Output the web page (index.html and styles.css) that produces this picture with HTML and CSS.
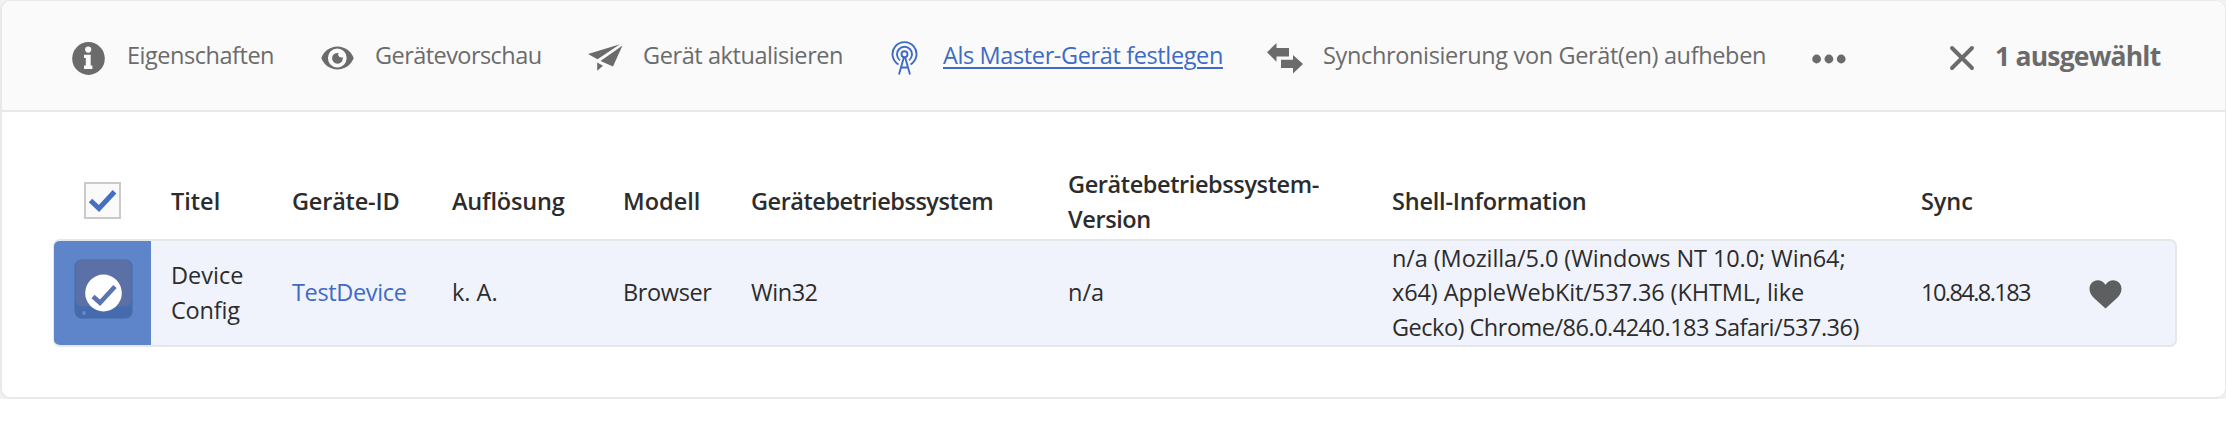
FILE: index.html
```html
<!DOCTYPE html>
<html lang="de">
<head>
<meta charset="utf-8">
<title>Geräte</title>
<link rel="stylesheet" href="styles.css">
</head>
<body>
<div class="frame">
<main class="panel">
  <header class="toolbar">
    <a class="action props"><svg class="icon" width="33" height="33" viewBox="0 0 33 33"><ellipse cx="16.5" cy="16.5" rx="16.3" ry="16.4" fill="#6b6b6b"/><circle cx="16.2" cy="7.6" r="3.1" fill="#fafafa"/><path d="M12 12.8h6.700v10.700h1.700V27h-8.400v-3.500h1.800V16H12z" fill="#fafafa"/></svg><span class="label">Eigenschaften</span></a>
    <a class="action preview"><svg class="icon" width="33" height="24" viewBox="0 0 33 24"><path fill="#6b6b6b" fill-rule="evenodd" d="M16.500 0.500C9 .5 2.500 5.500.3 12 2.500 18.500 9 23.500 16.500 23.500S30.500 18.500 32.700 12C30.500 5.500 24 .5 16.500.5zM16.300 2.600a9.400 9.400 0 1 1 0 18.800a9.400 9.400 0 1 1 0-18.800z"/><path fill="#6b6b6b" d="M17.500 7a3 3 0 0 0 4.200 4A5.400 5.400 0 1 1 17.500 7z"/></svg><span class="label">Gerätevorschau</span></a>
    <a class="action update"><svg class="icon" width="35" height="27" viewBox="0 0 35 27"><path fill="#6b6b6b" d="M0 10 32 .3 9.500 15.300zM34.500 1.500 25 22.500 12.500 17zM9.200 18.500 15 21.800 9.200 26.800z"/></svg><span class="label">Gerät aktualisieren</span></a>
    <a class="action master"><svg class="icon" width="27" height="34" viewBox="0 0 27 34"><g fill="none" stroke="#3e6bc5" stroke-width="1.900"><path d="M7.500 23.500A12 12 0 1 1 19.500 23.500M9 19.300A7.500 7.500 0 1 1 18 19.300"/><circle cx="13.500" cy="13.300" r="3"/><path d="M12.800 16.500 8 33.500M14.200 16.500 19 33.500M10.200 26.500h6.600"/></g></svg><span class="label">Als Master-Gerät festlegen</span></a>
    <a class="action sync"><svg class="icon" width="36" height="31" viewBox="0 0 36 31"><path fill="#6b6b6b" d="M0 9.300 9.500 0V5H22v8.500H9.500v5.200zM36 21 26 30.500V25H14v-8.300h12V12z"/></svg><span class="label">Synchronisierung von Gerät(en) aufheben</span></a>
    <a class="more"><svg class="icon" width="34" height="10" viewBox="0 0 34 10"><g fill="#6b6b6b"><circle cx="4.600" cy="5" r="4.400"/><circle cx="16.900" cy="5" r="4.400"/><circle cx="29.200" cy="5" r="4.400"/></g></svg></a>
    <a class="selected"><svg class="icon" width="26" height="26" viewBox="0 0 26 26"><path d="M3 3 23 23M23 3 3 23" stroke="#6b6b6b" stroke-width="3.900" stroke-linecap="round"/></svg><span class="count">1 ausgewählt</span></a>
  </header>
  <section class="table">
    <div class="row head">
      <div class="check"><span class="box"><svg width="29" height="24" viewBox="0 0 29 24"><path d="M2.500 11.500 11 19.500 26.500 2.800" fill="none" stroke="#446fc3" stroke-width="5"/></svg></span></div>
      <div class="cell">Titel</div>
      <div class="cell k19">Geräte-ID</div>
      <div class="cell k19">Auflösung</div>
      <div class="cell">Modell</div>
      <div class="cell k48">Gerätebetriebssystem</div>
      <div class="cell k40">Gerätebetriebssystem-<br>Version</div>
      <div class="cell k22">Shell-Information</div>
      <div class="cell k10">Sync</div>
    </div>
    <div class="row item">
      <div class="thumb"><svg width="59" height="60" viewBox="0 0 59 60"><rect x=".5" y=".5" width="58" height="59" rx="7" fill="#456aae"/><path d="M7.500 1h44a6 6 0 0 1 6 6v34a7 7 0 0 1-7 6.500h-42a7 7 0 0 1-7-6.500V7a6 6 0 0 1 6-6z" fill="#5c70a8"/><ellipse cx="10" cy="54" rx="1.800" ry="2" fill="#6a8bd0"/><ellipse cx="29.500" cy="34" rx="18.300" ry="18.500" fill="#fff"/><path d="M19 37.500 26 43.800 41 27.500" fill="none" stroke="#5b73b0" stroke-width="4.600"/></svg></div>
      <div class="cell"><span>Device</span><br><span class="k19">Config</span></div>
      <div class="cell link k35">TestDevice</div>
      <div class="cell">k. A.</div>
      <div class="cell k35">Browser</div>
      <div class="cell k48">Win32</div>
      <div class="cell">n/a</div>
      <div class="cell shell"><span class="k10">n/a (Mozilla/5.0 (Windows NT 10.0; Win64;</span><br><span class="k10">x64) AppleWebKit/537.36 (KHTML, like</span><br><span class="k50">Gecko) Chrome/86.0.4240.183 Safari/537.36)</span></div>
      <div class="cell ip">10.84.8.183</div>
      <div class="heart"><svg width="33" height="29" viewBox="0 0 33 29"><path fill="#5e5f61" d="M16.500 4.800C18.500 1.500 21.500.2 24.300.2c4.700 0 8.200 3.800 8.200 8.600 0 4.200-2.300 7.200-5 9.700L16.500 28.600 5.500 18.500C2.800 16 .5 13 .5 8.800.5 4 4 .2 8.700.2c2.800 0 5.800 1.300 7.800 4.600z"/></svg></div>
    </div>
  </section>
</main>
</div>
</body>
</html>
```
FILE: styles.css
```css
* { box-sizing: border-box; }
body {
  margin: 0;
  background: #fff;
  color: #2c2c2c;
  font: 400 23.5px/34.300px "Open Sans", "Noto Sans", sans-serif;
}
.frame { height: 399px; background: #f2f2f2; }
.panel {
  height: 399px;
  border: 2px solid #e9e9e9;
  border-top-width: 1px;
  border-right-width: 1px;
  border-radius: 10px;
  background: #fff;
  overflow: hidden;
}
.toolbar {
  display: flex;
  align-items: center;
  height: 111px;
  padding: 0 0 1px 70px;
  border-bottom: 2px solid #e9e9e9;
  background: #fafafa;
  color: #6b6b6b;
  white-space: nowrap;
}
.action, .more, .selected { display: flex; align-items: center; flex: none; }
.icon { flex: none; margin-top: 6px; }
.label { padding-top: 1px; }
.props { width: 249px; gap: 22px; letter-spacing: -.47px; }
.preview { width: 267px; gap: 21px; letter-spacing: -.56px; }
.update { width: 303px; gap: 20px; letter-spacing: -.42px; }
.master { width: 376px; gap: 25px; letter-spacing: -.38px; color: #3e6bc5; }
.master .label {
  text-decoration: underline;
  text-decoration-thickness: 2px;
  text-underline-offset: 3px;
}
.sync { width: 545px; gap: 20px; letter-spacing: -.35px; }
.more { width: 137px; padding-top: 2px; }
.selected { gap: 20px; font-size: 26.500px; font-weight: 700; letter-spacing: -.8px; }
.count { padding-top: 3px; }
.table { padding: 54px 48px 0 51px; }
.row {
  display: grid;
  grid-template-columns: 118px 121px 160px 171px 128px 317px 324px 529px 168px 1fr;
  align-items: center;
}
.head { height: 73px; font-weight: 600; }
.head .cell { padding-bottom: 2px; }
.check { padding: 0 0 4px 31px; display: flex; }
.box {
  display: flex;
  align-items: center;
  justify-content: center;
  width: 37px;
  height: 37px;
  border: 2px solid #cacaca;
  background: #fafafa;
}
.item {
  height: 108px;
  border: 2px solid #e6e7e9;
  border-left-width: 1px;
  border-radius: 7px;
  background: #f0f3fc;
  overflow: hidden;
  grid-template-columns: 117px 121px 160px 171px 128px 317px 324px 529px 168px 1fr;
}
.cell { white-space: nowrap; }
.item .cell { padding-bottom: 1px; }
.thumb {
  display: flex;
  align-items: center;
  width: 97px;
  height: 104px;
  padding: 0 0 9px 20px;
  background: #5e84c9;
}
.link { color: #3e6bc5; }
.item .ip { letter-spacing: -1.550px; }
.heart { display: flex; padding-top: 3px; }
.k10 { letter-spacing: -.1px; }
.k19 { letter-spacing: -.19px; }
.k22 { letter-spacing: -.22px; }
.k35 { letter-spacing: -.36px; }
.k40 { letter-spacing: -.4px; }
.k48 { letter-spacing: -.47px; }
.k50 { letter-spacing: -.5px; }
```
